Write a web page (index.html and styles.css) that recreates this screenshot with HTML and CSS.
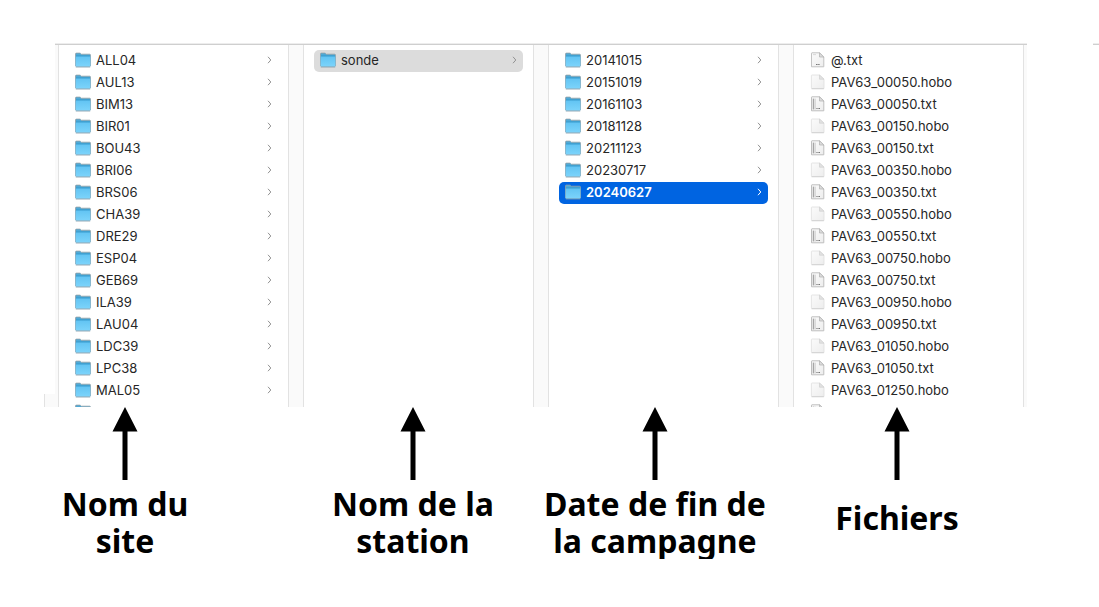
FILE: index.html
```html
<!DOCTYPE html>
<html lang="fr">
<head>
<meta charset="utf-8">
<title>Arborescence des fichiers</title>
<link rel="stylesheet" href="styles.css">
</head>
<body>
<svg class="defs" width="0" height="0" aria-hidden="true">
  <defs>
    <linearGradient id="front" x1="0" y1="0" x2="0" y2="1">
      <stop offset="0" stop-color="#62c4f3"/><stop offset="1" stop-color="#7dd4fb"/>
    </linearGradient>
    <linearGradient id="paper" x1="0" y1="0" x2="1" y2="1">
      <stop offset="0" stop-color="#fbfbfb"/><stop offset="1" stop-color="#ededed"/>
    </linearGradient>
    <symbol id="folder" viewBox="0 0 16 16">
      <path d="M.5 14V2q0-.9.9-.9h3.400q.5 0 .9.5l.6.6h8.300q.9 0 .9.9V14z" fill="#4fa9d6" stroke="#949ea4" stroke-width=".8"/>
      <path d="M1 3.600h14v1H1z" fill="#2b93c8"/>
      <path d="M.6 4.600h14.800v9.400q0 .8-.8.8H1.400q-.8 0-.8-.8z" fill="url(#front)"/>
      <path d="M.8 15h14.400" stroke="#7f98a4" stroke-width=".8"/>
    </symbol>
    <symbol id="hobo" viewBox="0 0 16 16">
      <path d="M2 1h7.500L14 5.200v9.300H2q-.6 0-.6-.6V1.600Q1.400 1 2 1z" fill="url(#paper)" stroke="#dedede" stroke-width=".8"/>
      <path d="M1.600 14.800h12.200" stroke="#c9c9c9" stroke-width=".7"/>
      <path d="M9.500 1v4.200H14z" fill="#e2e2e2" stroke="#d0d0d0" stroke-width=".7"/>
    </symbol>
    <symbol id="text" viewBox="0 0 16 16">
      <path d="M2 .8h7.500L13.800 5v9.800H1.500V1.300q0-.5.5-.5z" fill="url(#paper)" stroke="#b8b8b8" stroke-width=".9"/>
      <path d="M9.500 .8V5h4.300z" fill="#ddd" stroke="#b0b0b0" stroke-width=".7"/>
      <path d="M3.500 2.600v10.800" stroke="#a6a6a6" stroke-width="1.500"/>
      <path d="M5.400 2.600v10.800" stroke="#cacaca" stroke-width=".7"/>
      <path d="M6.400 12.500h1.200M8.400 12.500h1.600" stroke="#777"/>
    </symbol>
    <symbol id="note" viewBox="0 0 16 16">
      <path d="M2 .8h7.500L13.800 5v9.800H1.500V1.300q0-.5.5-.5z" fill="url(#paper)" stroke="#bcbcbc" stroke-width=".9"/>
      <path d="M9.500 .8V5h4.300z" fill="#ddd" stroke="#b0b0b0" stroke-width=".7"/>
      <path d="M3 2.600h3" stroke="#ccc" stroke-width=".7"/>
      <path d="M6 12.500h1.600M8.200 12.500h1.400" stroke="#777"/>
    </symbol>
    <symbol id="chevron" viewBox="0 0 5 8">
      <path d="M1 .8 3.800 4 1 7.200" fill="none" stroke="currentColor"/>
    </symbol>
    <symbol id="arrow" viewBox="0 0 26 73">
      <path d="M13 0 25.500 24.500H15.500V73H10.500V24.500H.5z"/>
    </symbol>
  </defs>
</svg>
<main>
  <div class="stage">
    <div class="edge"></div>
    <div class="browser">
      <ul class="column">
        <li><button class="row"><svg class="icon"><use href="#folder"/></svg><span>ALL04</span><svg class="chevron"><use href="#chevron"/></svg></button></li>
        <li><button class="row"><svg class="icon"><use href="#folder"/></svg><span>AUL13</span><svg class="chevron"><use href="#chevron"/></svg></button></li>
        <li><button class="row"><svg class="icon"><use href="#folder"/></svg><span>BIM13</span><svg class="chevron"><use href="#chevron"/></svg></button></li>
        <li><button class="row"><svg class="icon"><use href="#folder"/></svg><span>BIR01</span><svg class="chevron"><use href="#chevron"/></svg></button></li>
        <li><button class="row"><svg class="icon"><use href="#folder"/></svg><span>BOU43</span><svg class="chevron"><use href="#chevron"/></svg></button></li>
        <li><button class="row"><svg class="icon"><use href="#folder"/></svg><span>BRI06</span><svg class="chevron"><use href="#chevron"/></svg></button></li>
        <li><button class="row"><svg class="icon"><use href="#folder"/></svg><span>BRS06</span><svg class="chevron"><use href="#chevron"/></svg></button></li>
        <li><button class="row"><svg class="icon"><use href="#folder"/></svg><span>CHA39</span><svg class="chevron"><use href="#chevron"/></svg></button></li>
        <li><button class="row"><svg class="icon"><use href="#folder"/></svg><span>DRE29</span><svg class="chevron"><use href="#chevron"/></svg></button></li>
        <li><button class="row"><svg class="icon"><use href="#folder"/></svg><span>ESP04</span><svg class="chevron"><use href="#chevron"/></svg></button></li>
        <li><button class="row"><svg class="icon"><use href="#folder"/></svg><span>GEB69</span><svg class="chevron"><use href="#chevron"/></svg></button></li>
        <li><button class="row"><svg class="icon"><use href="#folder"/></svg><span>ILA39</span><svg class="chevron"><use href="#chevron"/></svg></button></li>
        <li><button class="row"><svg class="icon"><use href="#folder"/></svg><span>LAU04</span><svg class="chevron"><use href="#chevron"/></svg></button></li>
        <li><button class="row"><svg class="icon"><use href="#folder"/></svg><span>LDC39</span><svg class="chevron"><use href="#chevron"/></svg></button></li>
        <li><button class="row"><svg class="icon"><use href="#folder"/></svg><span>LPC38</span><svg class="chevron"><use href="#chevron"/></svg></button></li>
        <li><button class="row"><svg class="icon"><use href="#folder"/></svg><span>MAL05</span><svg class="chevron"><use href="#chevron"/></svg></button></li>
        <li class="cut"><svg class="icon"><use href="#folder"/></svg></li>
      </ul>
      <ul class="column">
        <li><button class="row open"><svg class="icon"><use href="#folder"/></svg><span>sonde</span><svg class="chevron"><use href="#chevron"/></svg></button></li>
      </ul>
      <ul class="column">
        <li><button class="row"><svg class="icon"><use href="#folder"/></svg><span>20141015</span><svg class="chevron"><use href="#chevron"/></svg></button></li>
        <li><button class="row"><svg class="icon"><use href="#folder"/></svg><span>20151019</span><svg class="chevron"><use href="#chevron"/></svg></button></li>
        <li><button class="row"><svg class="icon"><use href="#folder"/></svg><span>20161103</span><svg class="chevron"><use href="#chevron"/></svg></button></li>
        <li><button class="row"><svg class="icon"><use href="#folder"/></svg><span>20181128</span><svg class="chevron"><use href="#chevron"/></svg></button></li>
        <li><button class="row"><svg class="icon"><use href="#folder"/></svg><span>20211123</span><svg class="chevron"><use href="#chevron"/></svg></button></li>
        <li><button class="row"><svg class="icon"><use href="#folder"/></svg><span>20230717</span><svg class="chevron"><use href="#chevron"/></svg></button></li>
        <li><button class="row selected"><svg class="icon"><use href="#folder"/></svg><span>20240627</span><svg class="chevron"><use href="#chevron"/></svg></button></li>
      </ul>
      <ul class="column">
        <li><button class="row"><svg class="icon"><use href="#note"/></svg><span>@.txt</span></button></li>
        <li><button class="row"><svg class="icon"><use href="#hobo"/></svg><span>PAV63_00050.hobo</span></button></li>
        <li><button class="row"><svg class="icon"><use href="#text"/></svg><span>PAV63_00050.txt</span></button></li>
        <li><button class="row"><svg class="icon"><use href="#hobo"/></svg><span>PAV63_00150.hobo</span></button></li>
        <li><button class="row"><svg class="icon"><use href="#text"/></svg><span>PAV63_00150.txt</span></button></li>
        <li><button class="row"><svg class="icon"><use href="#hobo"/></svg><span>PAV63_00350.hobo</span></button></li>
        <li><button class="row"><svg class="icon"><use href="#text"/></svg><span>PAV63_00350.txt</span></button></li>
        <li><button class="row"><svg class="icon"><use href="#hobo"/></svg><span>PAV63_00550.hobo</span></button></li>
        <li><button class="row"><svg class="icon"><use href="#text"/></svg><span>PAV63_00550.txt</span></button></li>
        <li><button class="row"><svg class="icon"><use href="#hobo"/></svg><span>PAV63_00750.hobo</span></button></li>
        <li><button class="row"><svg class="icon"><use href="#text"/></svg><span>PAV63_00750.txt</span></button></li>
        <li><button class="row"><svg class="icon"><use href="#hobo"/></svg><span>PAV63_00950.hobo</span></button></li>
        <li><button class="row"><svg class="icon"><use href="#text"/></svg><span>PAV63_00950.txt</span></button></li>
        <li><button class="row"><svg class="icon"><use href="#hobo"/></svg><span>PAV63_01050.hobo</span></button></li>
        <li><button class="row"><svg class="icon"><use href="#text"/></svg><span>PAV63_01050.txt</span></button></li>
        <li><button class="row"><svg class="icon"><use href="#hobo"/></svg><span>PAV63_01250.hobo</span></button></li>
        <li class="cut"><svg class="icon"><use href="#text"/></svg></li>
      </ul>
    </div>
    <div class="stub"></div>
  </div>
  <div class="captions">
    <div class="caption site"><svg class="arrow"><use href="#arrow"/></svg><p>Nom du<br>site</p></div>
    <div class="caption"><svg class="arrow"><use href="#arrow"/></svg><p>Nom de la<br>station</p></div>
    <div class="caption"><svg class="arrow"><use href="#arrow"/></svg><p>Date de fin de<br>la campagne</p></div>
    <div class="caption single"><svg class="arrow"><use href="#arrow"/></svg><p>Fichiers</p></div>
  </div>
</main>
</body>
</html>
```
FILE: styles.css
```css
* {
  box-sizing: border-box;
}

body {
  margin: 0;
  background: #fff;
  color: #262626;
  font-family: Inter, "Liberation Sans", sans-serif;
  font-size: 13px;
}

.defs {
  display: block;
}

main {
  padding-top: 43px;
}

.stage {
  display: flex;
  padding-left: 44px;
}

.edge {
  align-self: flex-end;
  width: 11px;
  height: 13px;
  border-left: 1px solid #e2e2e2;
  background: #fafafa;
}

.browser,
.stub {
  border-top: 1px solid #ededed;
  box-shadow: inset 0 1px #cfcfcf;
}

.browser {
  flex: 1;
  display: grid;
  grid-template-columns: repeat(4, 1fr);
  column-gap: 14px;
  padding: 1px 3px 0;
  background: #fafafa;
}

.stub {
  width: 6px;
  margin-left: 66px;
}

.column {
  margin: 0;
  padding: 5px 10px 0;
  list-style: none;
  border: solid #e2e2e2;
  border-width: 0 1px;
  background: #fff;
}

.row {
  display: flex;
  align-items: center;
  gap: 5px;
  width: 100%;
  height: 22px;
  padding: 0 6px 2px;
  border: 0;
  border-radius: 5px;
  background: none;
  color: inherit;
  font: inherit;
  text-align: left;
}

.icon {
  flex: none;
  width: 16px;
  height: 16px;
}

.chevron {
  width: 5px;
  height: 8px;
  margin-left: auto;
  color: #929292;
}

.open {
  background: #dcdcdc;
}

.selected {
  background: #0064e1;
  color: #fff;
  font-weight: 600;
}

.selected .chevron {
  color: #fff;
}

.cut {
  height: 5px;
  padding: 2px 6px 0;
  overflow: hidden;
}

.captions {
  display: grid;
  grid-template-columns: 250fr 43fr 240fr 2fr 240fr 2fr 240fr 82fr;
  color: #000;
  font: bold 32px/37px "Noto Sans", sans-serif;
  text-align: center;
  white-space: nowrap;
}

.caption {
  grid-row: 1;
  grid-column: 3;
  display: flex;
  flex-direction: column;
  align-items: center;
  gap: 5px;
}

.site {
  grid-column: 1;
}

.caption:nth-child(3) {
  grid-column: 5;
}

.single {
  grid-column: 7;
  gap: 19px;
}

.caption p {
  margin: 0;
}

.arrow {
  width: 26px;
  height: 73px;
}
```
